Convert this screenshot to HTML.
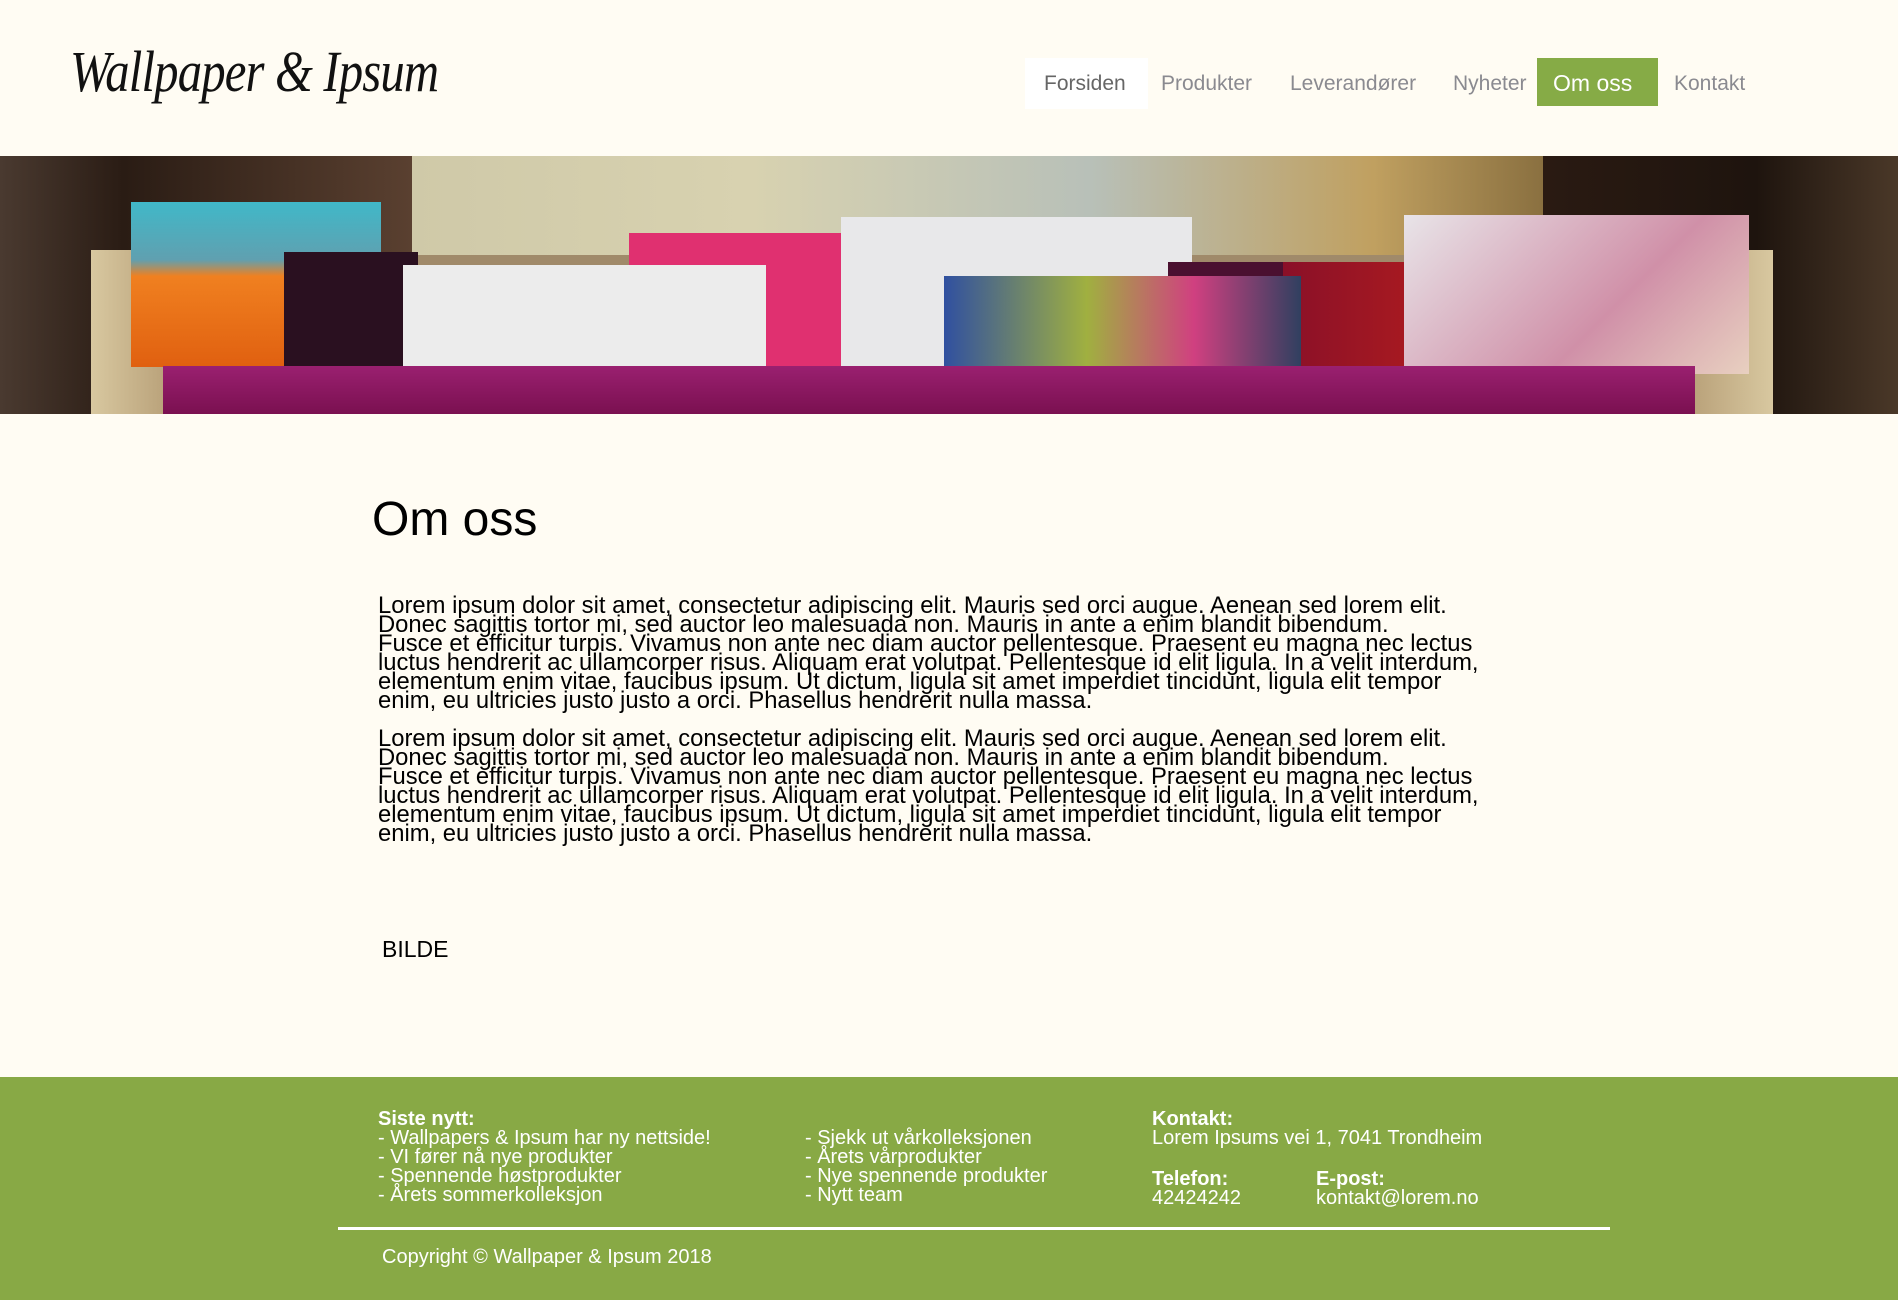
<!DOCTYPE html>
<html><head><meta charset="utf-8">
<style>
*{margin:0;padding:0;box-sizing:border-box}
body{width:1898px;height:1300px;background:#fffcf3;font-family:"Liberation Sans",Arial,sans-serif;position:relative;overflow:hidden}
.a{position:absolute}
.logo{left:70px;top:38px;font-family:"Liberation Serif",serif;font-style:italic;font-size:58px;color:#111;letter-spacing:-1px;transform:scaleX(0.84);transform-origin:left}
.nav{top:59px;height:50px;line-height:50px;font-size:21px;color:#8a8a90}
.banner{left:0;top:156px;width:1898px;height:258px;overflow:hidden;background:#3a2a20}
.banner div{position:absolute}
h1{position:absolute;left:372px;top:492px;font-size:48px;font-weight:normal;color:#000}
.p{left:378px;width:1200px;font-size:23.8px;line-height:19px;color:#000;white-space:nowrap}
.f{color:#fff;font-size:20px;line-height:19px}
.f b{font-weight:900}
</style></head><body>
<div class="a logo">Wallpaper &amp; Ipsum</div>
<div class="a" style="left:1025px;top:58px;width:123px;height:51px;background:#fff"></div>
<div class="a nav" style="left:1044px;color:#666">Forsiden</div>
<div class="a nav" style="left:1161px">Produkter</div>
<div class="a nav" style="left:1290px">Leverandører</div>
<div class="a nav" style="left:1453px">Nyheter</div>
<div class="a" style="left:1537px;top:58px;width:121px;height:48px;background:#86ab46"></div>
<div class="a nav" style="left:1553px;top:58px;color:#fff;font-size:23px">Om oss</div>
<div class="a nav" style="left:1674px">Kontakt</div>

<div class="a banner">
 <div style="left:0;top:0;width:412px;height:258px;background:linear-gradient(90deg,#4a3a30,#2a1c14 30%,#5a4030)"></div>
 <div style="left:412px;top:0;width:1131px;height:110px;background:linear-gradient(90deg,#cfc9a8,#d8d2b0 30%,#b8c0b8 60%,#c0a060 85%,#8a7040)"></div>
 <div style="left:1543px;top:0;width:355px;height:258px;background:linear-gradient(90deg,#2a1a12,#1e140e 60%,#4a3828)"></div>
 <div style="left:97px;top:99px;width:1670px;height:12px;background:#a08a6a"></div>
 <div style="left:412px;top:110px;width:1131px;height:100px;background:#3a2018"></div>
 <div style="left:91px;top:94px;width:79px;height:164px;background:linear-gradient(90deg,#d8c8a0,#b8a078)"></div>
 <div style="left:1689px;top:94px;width:84px;height:164px;background:linear-gradient(90deg,#b8a078,#d8c8a0)"></div>
 <div style="left:131px;top:46px;width:250px;height:165px;background:linear-gradient(180deg,#40b8c8 0%,#60a0b0 35%,#f08020 45%,#e06010 100%)"></div>
 <div style="left:284px;top:96px;width:134px;height:115px;background:#2a1020"></div>
 <div style="left:629px;top:77px;width:281px;height:137px;background:#e03070"></div>
 <div style="left:841px;top:61px;width:351px;height:153px;background:#e8e8ea"></div>
 <div style="left:403px;top:109px;width:363px;height:104px;background:#ececec"></div>
 <div style="left:1168px;top:106px;width:164px;height:112px;background:#4a1030"></div>
 <div style="left:1283px;top:106px;width:272px;height:113px;background:linear-gradient(90deg,#8a1028,#c82418)"></div>
 <div style="left:1404px;top:59px;width:345px;height:159px;background:linear-gradient(135deg,#e8e4e8,#d090a8 60%,#e8d0c0)"></div>
 <div style="left:944px;top:120px;width:357px;height:98px;background:linear-gradient(90deg,#3050a0,#a0b040 40%,#d04080 70%,#304060)"></div>
 <div style="left:163px;top:210px;width:1532px;height:48px;background:linear-gradient(180deg,#9a2070,#7a1050)"></div>
</div>

<h1>Om oss</h1>
<div class="a p" style="top:596px">Lorem ipsum dolor sit amet, consectetur adipiscing elit. Mauris sed orci augue. Aenean sed lorem elit.<br>Donec sagittis tortor mi, sed auctor leo malesuada non. Mauris in ante a enim blandit bibendum.<br>Fusce et efficitur turpis. Vivamus non ante nec diam auctor pellentesque. Praesent eu magna nec lectus<br>luctus hendrerit ac ullamcorper risus. Aliquam erat volutpat. Pellentesque id elit ligula. In a velit interdum,<br>elementum enim vitae, faucibus ipsum. Ut dictum, ligula sit amet imperdiet tincidunt, ligula elit tempor<br>enim, eu ultricies justo justo a orci. Phasellus hendrerit nulla massa.</div>
<div class="a p" style="top:729px">Lorem ipsum dolor sit amet, consectetur adipiscing elit. Mauris sed orci augue. Aenean sed lorem elit.<br>Donec sagittis tortor mi, sed auctor leo malesuada non. Mauris in ante a enim blandit bibendum.<br>Fusce et efficitur turpis. Vivamus non ante nec diam auctor pellentesque. Praesent eu magna nec lectus<br>luctus hendrerit ac ullamcorper risus. Aliquam erat volutpat. Pellentesque id elit ligula. In a velit interdum,<br>elementum enim vitae, faucibus ipsum. Ut dictum, ligula sit amet imperdiet tincidunt, ligula elit tempor<br>enim, eu ultricies justo justo a orci. Phasellus hendrerit nulla massa.</div>
<div class="a" style="left:382px;top:936px;font-size:23px">BILDE</div>

<div class="a" style="left:0;top:1077px;width:1898px;height:223px;background:#88a945"></div>
<div class="a f" style="left:378px;top:1110px"><b>Siste nytt:</b><br>- Wallpapers &amp; Ipsum har ny nettside!<br>- VI fører nå nye produkter<br>- Spennende høstprodukter<br>- Årets sommerkolleksjon</div>
<div class="a f" style="left:805px;top:1129px">- Sjekk ut vårkolleksjonen<br>- Årets vårprodukter<br>- Nye spennende produkter<br>- Nytt team</div>
<div class="a f" style="left:1152px;top:1110px"><b>Kontakt:</b><br>Lorem Ipsums vei 1, 7041 Trondheim</div>
<div class="a f" style="left:1152px;top:1170px"><b>Telefon:</b><br>42424242</div>
<div class="a f" style="left:1316px;top:1170px"><b>E-post:</b><br>kontakt@lorem.no</div>
<div class="a" style="left:338px;top:1227px;width:1272px;height:3px;background:#fff"></div>
<div class="a f" style="left:382px;top:1248px">Copyright © Wallpaper &amp; Ipsum 2018</div>
</body></html>
